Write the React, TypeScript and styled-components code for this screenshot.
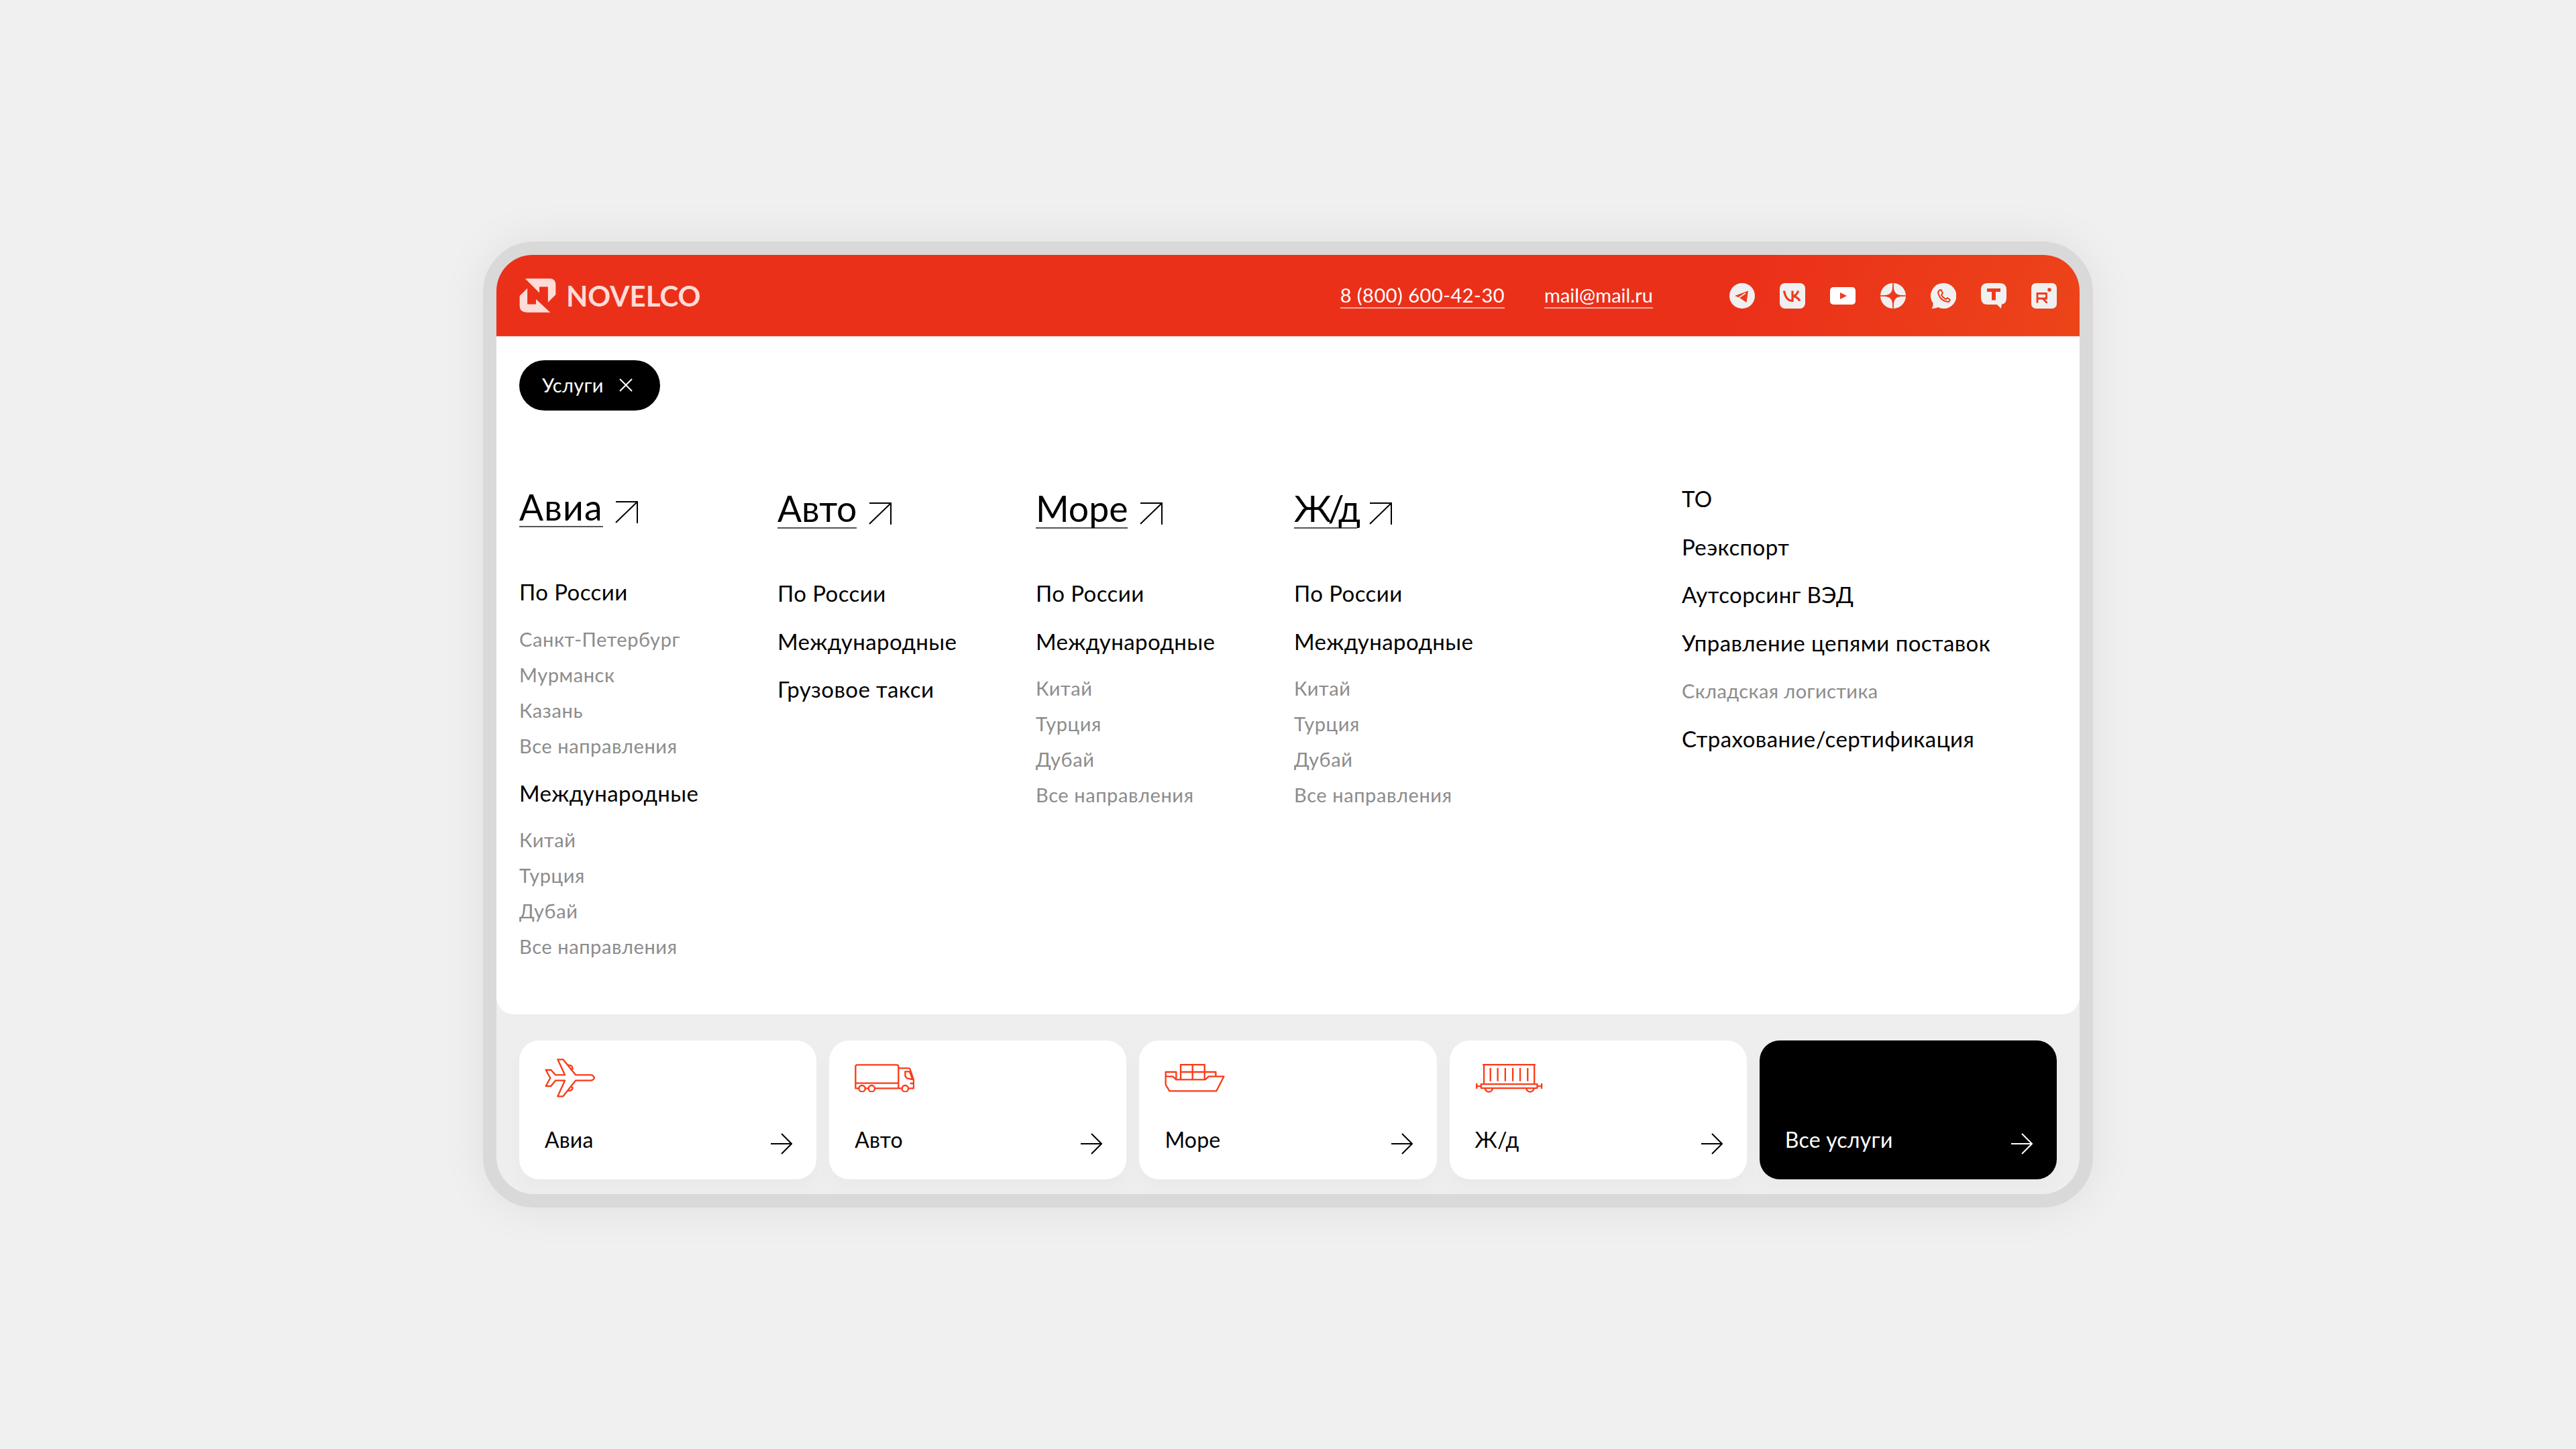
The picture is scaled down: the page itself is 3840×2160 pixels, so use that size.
import React from 'react';
import styled, { createGlobalStyle } from 'styled-components';

const Global = createGlobalStyle`
  html, body { margin: 0; padding: 0; background: #f0f0f0; }
  body { font-family: "Lato", "Open Sans", "Liberation Sans", sans-serif; }
  * { box-sizing: border-box; }
`;

const Page = styled.div`
  width: 100%;
  height: 100vh;
  display: flex;
  align-items: center;
  justify-content: center;
  background: #f0f0f0;
`;
const Frame = styled.div`
  width: 2400px;
  height: 1440px;
  border: 20px solid #d9d9d9;
  border-radius: 76px;
  background: #eeeeee;
  box-shadow: 0 0 70px rgba(0, 0, 0, 0.07);
`;
const Inner = styled.div`
  width: 100%;
  height: 100%;
  border-radius: 54px;
  overflow: hidden;
  display: flex;
  flex-direction: column;
`;
const Header = styled.header`
  height: 122px;
  flex: none;
  padding: 0 34px;
  display: flex;
  align-items: center;
  background: linear-gradient(110deg, #eb301a 78%, #ec4419 100%);
  border-bottom: 1px solid #ffc9c2;
`;
const Brand = styled.div`
  display: flex;
  align-items: center;
  gap: 15px;
  color: #ffdcd6;
  font-size: 42px;
  font-weight: 700;
`;
const Contacts = styled.div`
  margin-left: auto;
  display: flex;
  align-items: center;
  gap: 59px;
`;
const ContactLink = styled.a<{ $spacing: number }>`
  color: #fff;
  font-size: 29px;
  line-height: 37px;
  letter-spacing: ${(p) => p.$spacing}px;
  border-bottom: 2px solid rgba(255, 255, 255, 0.6);
`;
const Socials = styled.div`
  margin-left: 114px;
  display: flex;
  gap: 37px;
`;
const Content = styled.main`
  flex: none;
  height: 1010px;
  background: #fff;
  border-radius: 0 0 26px 26px;
  padding: 35px 34px 0;
`;
const Pill = styled.button`
  width: 210px;
  height: 75px;
  padding: 0 0 2px 34px;
  border: none;
  border-radius: 38px;
  background: #000;
  color: #fff;
  font: inherit;
  font-size: 29px;
  letter-spacing: 0.3px;
  display: flex;
  align-items: center;
  gap: 23px;
`;
const Columns = styled.div`
  margin-top: 95px;
  display: grid;
  grid-template-columns: 385px 385px 385px 578px 1fr;
  align-items: start;
`;
const Column = styled.section<{ $top: number }>`
  padding-top: ${(p) => p.$top}px;
`;
const TitleRow = styled.div`
  display: flex;
  align-items: flex-start;
  gap: 18px;
  height: 59px;
  margin-bottom: 60px;
`;
const Title = styled.a<{ $spacing: number }>`
  color: #000;
  font-size: 53.5px;
  line-height: 57px;
  letter-spacing: ${(p) => p.$spacing}px;
  border-bottom: 2px solid #555;
`;
const ArrowSlot = styled.span`
  display: block;
  padding-top: 20px;
`;
const MainItem = styled.div<{ $muted?: boolean }>`
  height: 71.7px;
  line-height: 72px;
  font-size: ${(p) => (p.$muted ? 29 : 33)}px;
  letter-spacing: ${(p) => (p.$muted ? 0.4 : 0.42)}px;
  color: ${(p) => (p.$muted ? '#8c8c8c' : '#000')};
  white-space: nowrap;
`;
const SubList = styled.div`
  margin: 8px 0;
`;
const SubItem = styled.div`
  height: 53px;
  line-height: 53px;
  font-size: 29px;
  letter-spacing: 0.6px;
  color: #8c8c8c;
  white-space: nowrap;
`;
const Bottom = styled.div`
  flex: 1;
  padding: 39px 34px 22px;
  display: grid;
  grid-template-columns: repeat(5, 1fr);
  gap: 19px;
`;
const Card = styled.a<{ $dark?: boolean }>`
  border-radius: 30px;
  padding: 26px 36px 0 38px;
  background: ${(p) => (p.$dark ? '#000' : '#fff')};
  color: ${(p) => (p.$dark ? '#fff' : '#000')};
  box-shadow: 0 12px 30px rgba(0, 0, 0, 0.025);
`;
const IconSlot = styled.div`
  height: 60px;
  display: flex;
  align-items: center;
`;
const CardRow = styled.div`
  margin-top: 42px;
  display: flex;
  justify-content: space-between;
  align-items: flex-start;
  font-size: 32px;
  letter-spacing: 0.2px;
  line-height: 40px;
`;
const CardArrow = styled.span`
  display: block;
  padding-top: 10px;
`;

const RED = '#ee3a1c';
const PALE = '#f0f0f0';

const Logo = () => (
  <svg width="55" height="51" viewBox="162 166 161 151" fill="#ffdcd6">
    <path d="M187 167 L250 230 V203 H288 V272 L322 238 V195 Q322 167 295 167 Z" />
    <path d="M298 316 L235 258 V280 H197 V210 L163 243 V288 Q163 316 195 316 Z" />
  </svg>
);

const Telegram = () => (
  <svg width="38" height="38" viewBox="0 0 38 38">
    <circle cx="19" cy="19" r="19" fill={PALE} />
    <path d="M28 11.5 L8 19 L14.5 21.5 L25.5 29 Z" fill={RED} />
    <path d="M14.5 21.5 L24 15" stroke={PALE} strokeWidth="1.6" fill="none" />
  </svg>
);
const Vk = () => (
  <svg width="38" height="38" viewBox="0 0 38 38" fill="none">
    <rect width="38" height="38" rx="8" fill={PALE} />
    <path d="M6.5 11.5 C8 20 11.5 26.5 19 26.5 V11.5 M19 19.5 C23 19.5 26.5 16 27.5 11.5 M19 19.5 C23.5 19.5 28 23 30 26.5" stroke={RED} strokeWidth="3.2" />
  </svg>
);
const Youtube = () => (
  <svg width="38" height="38" viewBox="0 0 38 38">
    <rect y="6" width="38" height="26" rx="5" fill="#fff" />
    <path d="M15 14 L25 19 L15 24 Z" fill={RED} />
  </svg>
);
const Dzen = () => (
  <svg width="38" height="38" viewBox="0 0 38 38">
    <circle cx="19" cy="19" r="19" fill={PALE} />
    <path d="M18.2 0 H19.8 L20 8 Q21 17 30 18 L38 18.2 V19.8 L30 20 Q21 21 20 30 L19.8 38 H18.2 L18 30 Q17 21 8 20 L0 19.8 V18.2 L8 18 Q17 17 18 8 Z" fill={RED} />
  </svg>
);
const Whatsapp = () => (
  <svg width="38" height="38" viewBox="0 0 38 38">
    <path d="M19 0 A19 19 0 1 1 11 36 Q7 38 1.5 38 Q4 35 3.6 30 A19 19 0 0 1 19 0 Z" fill={PALE} />
    <path d="M12.5 11 L15.5 10 L18 15 L16 17.5 Q18 22 23 24 L25 22 L29 25 L27 28 Q14 27 11 14 Z" fill="none" stroke={RED} strokeWidth="2" strokeLinejoin="round" />
  </svg>
);
const TBubble = () => (
  <svg width="38" height="38" viewBox="0 0 38 38">
    <path d="M10 0 H28 Q38 0 38 10 V22 Q38 31 31 31.5 L30 38 L24 32 H10 Q0 32 0 22 V10 Q0 0 10 0 Z" fill={PALE} />
    <path d="M9 8 H29 V13 H22 V25.5 H16 V13 H9 Z" fill={RED} />
  </svg>
);
const RBox = () => (
  <svg width="38" height="38" viewBox="0 0 38 38" fill="none">
    <rect width="38" height="38" rx="7" fill={PALE} />
    <path d="M9 29.5 V15.5 H22.5 V23 H9 M17 23 L23.5 29.5" stroke={RED} strokeWidth="2.8" />
    <circle cx="27" cy="10" r="2.8" fill={RED} />
  </svg>
);

const Close = () => (
  <svg width="20" height="20" viewBox="0 0 20 20" stroke="#fff" strokeWidth="2" fill="none">
    <path d="M1 1 L19 19 M19 1 L1 19" />
  </svg>
);
const DiagonalArrow = () => (
  <svg width="34" height="33" viewBox="0 0 34 33" stroke="#000" strokeWidth="2" fill="none">
    <path d="M1 32 L33 1 M1 1 H33 V33" />
  </svg>
);
const RightArrow = ({ color }: { color: string }) => (
  <svg width="32" height="32" viewBox="0 0 32 32" stroke={color} strokeWidth="2" fill="none">
    <path d="M0 16 H31 M16 1 L31 16 L16 31" />
  </svg>
);

const iconProps = { fill: 'none', stroke: '#fb3a17', strokeWidth: 7, strokeLinejoin: 'round' as const };

const Plane = () => (
  <svg width="75" height="58" viewBox="40 60 225 172" {...iconProps}>
    <path d="M262 145 Q258 132 245 132 H178 L122 63 H98 L130 132 H88 L68 110 H45 L65 146 L45 182 H68 L88 157 H130 L98 228 H122 L178 157 H245 Q258 157 262 145 Z" />
    <path d="M145 88 Q165 88 165 105 L155 108 M145 203 Q165 203 165 188 L155 185" />
  </svg>
);
const Truck = () => (
  <svg width="89" height="42" viewBox="44 76 267 126" {...iconProps}>
    <path d="M240 162 H48 V88 Q48 80 56 80 H232 Q240 80 240 88 V185 M48 162 V185 H62 M92 185 H105 M135 185 H255 M285 185 H308 V148 L292 100 Q290 95 285 95 H240" />
    <circle cx="77" cy="186" r="14" />
    <circle cx="120" cy="186" r="14" />
    <circle cx="270" cy="186" r="14" />
    <path d="M270 110 H290 L303 145 L278 140 L270 130 Z M292 163 H308" />
  </svg>
);
const Ship = () => (
  <svg width="90" height="42" viewBox="54 72 268 126" {...iconProps}>
    <path d="M58 128 H90 L105 142 H235 L250 128 H318 L285 193 H75 L58 165 Z" />
    <path d="M58 128 V108 H105 V142 M125 142 V75 H232 V142 M125 108 H282 V128 M178 75 V142" />
  </svg>
);
const Train = () => (
  <svg width="101" height="43" viewBox="60 72 302 130" {...iconProps}>
    <path d="M92 75 H330 M98 75 V163 M325 75 V163" />
    <path d="M127 90 V150 M160 90 V150 M194 90 V150 M228 90 V150 M261 90 V150 M295 90 V150" />
    <rect x="85" y="163" width="253" height="18" />
    <path d="M65 160 V184 M65 172 H85 M338 172 H358 M358 160 V184" />
    <path d="M103 181 A17 17 0 0 0 137 181 M289 181 A17 17 0 0 0 323 181" />
  </svg>
);

type Group = { name: string; subs?: string[] };
const DIRS = ['Все направления'];
const INTL = ['Китай', 'Турция', 'Дубай', ...DIRS];
const COLS: { title: string; top: number; spacing: number; groups: Group[] }[] = [
  {
    title: 'Авиа',
    top: 20,
    spacing: 1.2,
    groups: [
      { name: 'По России', subs: ['Санкт-Петербург', 'Мурманск', 'Казань', ...DIRS] },
      { name: 'Международные', subs: INTL },
    ],
  },
  { title: 'Авто', top: 22, spacing: 0, groups: [{ name: 'По России' }, { name: 'Международные' }, { name: 'Грузовое такси' }] },
  { title: 'Море', top: 22, spacing: 0, groups: [{ name: 'По России' }, { name: 'Международные', subs: INTL }] },
  { title: 'Ж/д', top: 22, spacing: -5, groups: [{ name: 'По России' }, { name: 'Международные', subs: INTL }] },
];
const SERVICES = ['ТО', 'Реэкспорт', 'Аутсорсинг ВЭД', 'Управление цепями поставок', 'Складская логистика', 'Страхование/сертификация'];
const CARDS: { label: string; icon?: React.ReactNode }[] = [
  { label: 'Авиа', icon: <Plane /> },
  { label: 'Авто', icon: <Truck /> },
  { label: 'Море', icon: <Ship /> },
  { label: 'Ж/д', icon: <Train /> },
  { label: 'Все услуги' },
];

export default function App() {
  return (
    <Page>
      <Global />
      <Frame>
        <Inner>
          <Header>
            <Brand>
              <Logo />
              NOVELCO
            </Brand>
            <Contacts>
              <ContactLink $spacing={0.5}>8 (800) 600-42-30</ContactLink>
              <ContactLink $spacing={0}>mail@mail.ru</ContactLink>
            </Contacts>
            <Socials>
              <Telegram />
              <Vk />
              <Youtube />
              <Dzen />
              <Whatsapp />
              <TBubble />
              <RBox />
            </Socials>
          </Header>
          <Content>
            <Pill>
              Услуги
              <Close />
            </Pill>
            <Columns>
              {COLS.map((c) => (
                <Column key={c.title} $top={c.top}>
                  <TitleRow>
                    <Title $spacing={c.spacing}>{c.title}</Title>
                    <ArrowSlot>
                      <DiagonalArrow />
                    </ArrowSlot>
                  </TitleRow>
                  {c.groups.map((g) => (
                    <React.Fragment key={g.name}>
                      <MainItem>{g.name}</MainItem>
                      {g.subs && (
                        <SubList>
                          {g.subs.map((s) => (
                            <SubItem key={s}>{s}</SubItem>
                          ))}
                        </SubList>
                      )}
                    </React.Fragment>
                  ))}
                </Column>
              ))}
              <Column $top={0}>
                {SERVICES.map((s) => (
                  <MainItem key={s} $muted={s === 'Складская логистика'}>
                    {s}
                  </MainItem>
                ))}
              </Column>
            </Columns>
          </Content>
          <Bottom>
            {CARDS.map((c) => (
              <Card key={c.label} $dark={!c.icon}>
                <IconSlot>{c.icon}</IconSlot>
                <CardRow>
                  {c.label}
                  <CardArrow>
                    <RightArrow color={c.icon ? '#000' : '#fff'} />
                  </CardArrow>
                </CardRow>
              </Card>
            ))}
          </Bottom>
        </Inner>
      </Frame>
    </Page>
  );
}
